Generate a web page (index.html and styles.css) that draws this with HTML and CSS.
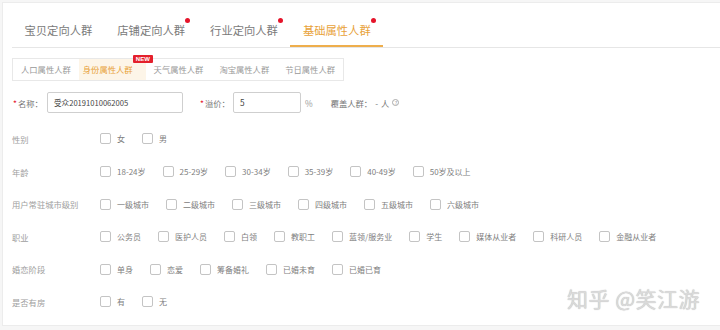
FILE: index.html
```html
<!DOCTYPE html>
<html lang="zh-CN">
<head>
<meta charset="utf-8">
<title>基础属性人群</title>
<link rel="stylesheet" href="styles.css">
</head>
<body>
<div class="frame">
  <div class="tabs">
    <div class="tab">宝贝定向人群</div>
    <div class="tab dot">店铺定向人群</div>
    <div class="tab dot">行业定向人群</div>
    <div class="tab dot active">基础属性人群</div>
  </div>

  <div class="subtabs">
    <div class="subtab">人口属性人群</div>
    <div class="subtab active">身份属性人群<span class="new">NEW</span></div>
    <div class="subtab">天气属性人群</div>
    <div class="subtab">淘宝属性人群</div>
    <div class="subtab">节日属性人群</div>
  </div>

  <div class="form-row">
    <span class="flabel name-label"><span class="req">*</span>名称：</span>
    <div class="input name-input">受众20191010062005</div>
    <span class="flabel price-label"><span class="req">*</span>溢价：</span>
    <div class="input price-input">5</div>
    <span class="unit">%</span>
    <span class="cover">覆盖人群：<span class="dash">-</span> 人 <span class="help">?</span></span>
  </div>

  <div class="row">
    <div class="rlabel">性别</div>
    <div class="opts">
      <label class="opt"><span class="cb"></span>女</label>
      <label class="opt"><span class="cb"></span>男</label>
    </div>
  </div>
  <div class="row">
    <div class="rlabel">年龄</div>
    <div class="opts">
      <label class="opt"><span class="cb"></span>18-24岁</label>
      <label class="opt"><span class="cb"></span>25-29岁</label>
      <label class="opt"><span class="cb"></span>30-34岁</label>
      <label class="opt"><span class="cb"></span>35-39岁</label>
      <label class="opt"><span class="cb"></span>40-49岁</label>
      <label class="opt"><span class="cb"></span>50岁及以上</label>
    </div>
  </div>
  <div class="row">
    <div class="rlabel">用户常驻城市级别</div>
    <div class="opts">
      <label class="opt"><span class="cb"></span>一级城市</label>
      <label class="opt"><span class="cb"></span>二级城市</label>
      <label class="opt"><span class="cb"></span>三级城市</label>
      <label class="opt"><span class="cb"></span>四级城市</label>
      <label class="opt"><span class="cb"></span>五级城市</label>
      <label class="opt"><span class="cb"></span>六级城市</label>
    </div>
  </div>
  <div class="row">
    <div class="rlabel">职业</div>
    <div class="opts">
      <label class="opt"><span class="cb"></span>公务员</label>
      <label class="opt"><span class="cb"></span>医护人员</label>
      <label class="opt"><span class="cb"></span>白领</label>
      <label class="opt"><span class="cb"></span>教职工</label>
      <label class="opt"><span class="cb"></span>蓝领/服务业</label>
      <label class="opt"><span class="cb"></span>学生</label>
      <label class="opt"><span class="cb"></span>媒体从业者</label>
      <label class="opt"><span class="cb"></span>科研人员</label>
      <label class="opt"><span class="cb"></span>金融从业者</label>
    </div>
  </div>
  <div class="row">
    <div class="rlabel">婚恋阶段</div>
    <div class="opts">
      <label class="opt"><span class="cb"></span>单身</label>
      <label class="opt"><span class="cb"></span>恋爱</label>
      <label class="opt"><span class="cb"></span>筹备婚礼</label>
      <label class="opt"><span class="cb"></span>已婚未育</label>
      <label class="opt"><span class="cb"></span>已婚已育</label>
    </div>
  </div>
  <div class="row">
    <div class="rlabel">是否有房</div>
    <div class="opts">
      <label class="opt"><span class="cb"></span>有</label>
      <label class="opt"><span class="cb"></span>无</label>
    </div>
  </div>
</div>
<div class="watermark">知乎 @笑江游</div>
</body>
</html>
```

FILE: styles.css
```css
* { box-sizing: border-box; }
html, body {
  margin: 0;
  padding: 0;
  background: #f6f6f6;
}
body {
  font-family: "Noto Sans CJK SC", "Open Sans", sans-serif;
  color: #777;
  width: 720px;
  height: 330px;
  overflow: hidden;
  position: relative;
}
.frame {
  margin: 2px 0 0 2px;
  height: 324px;
  background: #fff;
  border: 1px solid #ececec;
  border-right: none;
}

/* main tabs */
.tabs {
  display: flex;
  margin: 10px 0 0 9px;
  border-bottom: 1px solid #e6e6e6;
}
.tab {
  position: relative;
  height: 34px;
  line-height: 34px;
  padding: 0 12.5px;
  font-size: 11.3px;
  color: #7a7a7a;
  white-space: nowrap;
}
.tab.dot::after {
  content: "";
  position: absolute;
  top: 5px;
  right: 7.5px;
  width: 5px;
  height: 5px;
  border-radius: 50%;
  background: #e5142a;
}
.tab.active {
  color: #e8a23a;
  box-shadow: inset 0 -2px 0 #eeae4c;
}

/* sub tabs */
.subtabs {
  display: inline-flex;
  margin: 10px 0 0 9px;
  border: 1px solid #e8e8e8;
}
.subtab {
  position: relative;
  height: 21px;
  line-height: 21px;
  padding: 0 8px;
  font-size: 8.3px;
  color: #999;
  white-space: nowrap;
}
.subtab.active {
  padding: 0 13px 0 4px;
  background: #fdf5e8;
  color: #e8a23a;
}
.new {
  position: absolute;
  left: 54px;
  top: -4px;
  width: 20px;
  height: 8px;
  line-height: 8px;
  background: #e4202c;
  color: #fff;
  font-family: "Liberation Sans", sans-serif;
  font-weight: bold;
  font-size: 6px;
  text-align: center;
  border-radius: 1px;
}

/* form */
.form-row {
  display: flex;
  align-items: center;
  height: 21px;
  margin: 11px 0 0 10px;
  font-size: 8.3px;
  color: #777;
}
.flabel { white-space: nowrap; }
.req { color: #e5142a; margin-right: 1px; }
.name-label { width: 34px; }
.price-label { width: 33px; margin-left: 17px; }
.input {
  height: 21px;
  line-height: 19px;
  border: 1px solid #cfcfcf;
  border-radius: 2px;
  padding-left: 6px;
  color: #444;
  font-size: 7.6px;
}
.name-input { width: 136px; }
.price-input { width: 68px; font-size: 8.3px; }
.unit { margin-left: 4px; color: #999; }
.cover {
  margin-left: 18px;
  display: inline-flex;
  align-items: center;
  white-space: nowrap;
}
.dash { margin: 0 3px; }
.help {
  display: inline-block;
  width: 7px;
  height: 7px;
  margin-left: 3px;
  border: 1px solid #aaa;
  border-radius: 50%;
  font-size: 5px;
  line-height: 5px;
  text-align: center;
  color: #999;
}

/* option rows */
.row {
  display: flex;
  align-items: center;
  height: 32.6px;
  margin-left: 9px;
}
.form-row + .row { margin-top: 9.7px; }
.rlabel {
  width: 88px;
  font-size: 8.3px;
  color: #a0a0a0;
  white-space: nowrap;
}
.opts {
  display: flex;
  align-items: center;
}
.opt {
  display: inline-flex;
  align-items: center;
  margin-right: 17px;
  font-size: 8px;
  color: #808080;
  white-space: nowrap;
}
.cb {
  display: inline-block;
  width: 11px;
  height: 11px;
  border: 1px solid #c4c4c4;
  border-radius: 2px;
  background: #fff;
  margin-right: 6px;
}

/* watermark */
.watermark {
  position: absolute;
  left: 567px;
  top: 283px;
  font-size: 21px;
  color: #dadada;
  text-shadow: 0 0 1px #b0b0b0;
  white-space: nowrap;
  letter-spacing: 0.5px;
}
```
